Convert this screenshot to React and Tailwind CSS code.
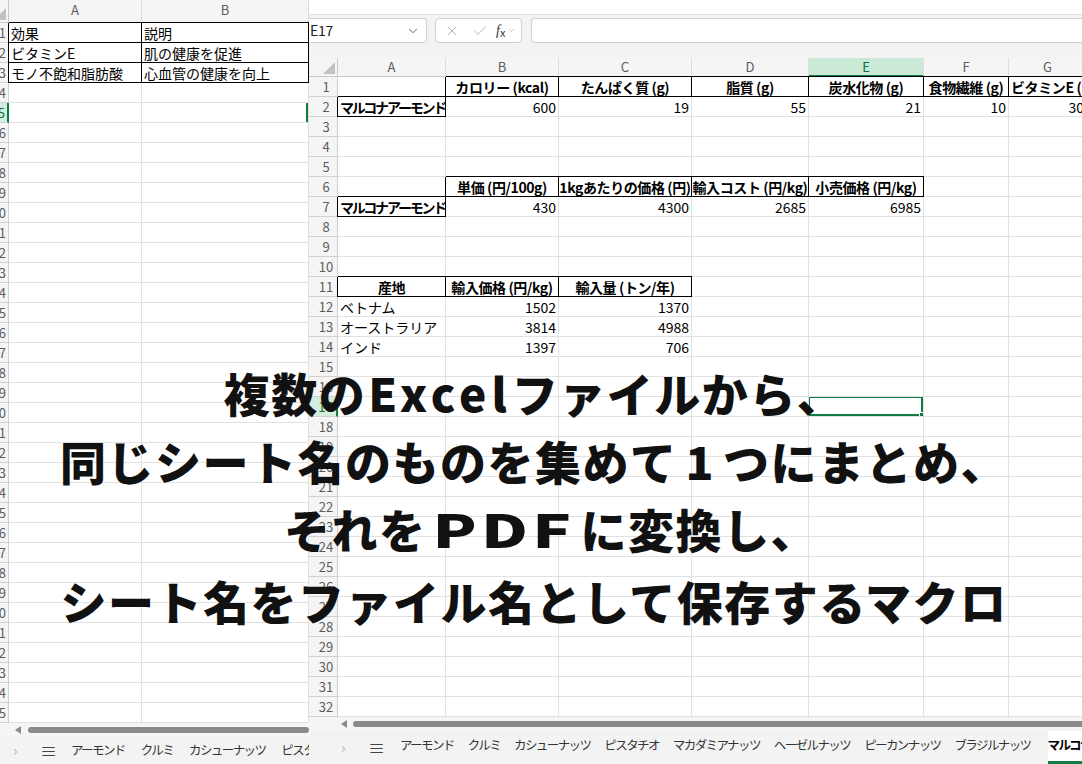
import React from 'react';
import { X, Check, ChevronDown } from 'lucide-react';

const FONT = "font-['Noto_Sans_CJK_JP','Noto_Sans',sans-serif]";

// 右側シートの列
const rCols = [
  { k: 'A', w: 'w-[108px]' },
  { k: 'B', w: 'w-[113px]' },
  { k: 'C', w: 'w-[133px]' },
  { k: 'D', w: 'w-[117px]' },
  { k: 'E', w: 'w-[115px]' },
  { k: 'F', w: 'w-[85px]' },
  { k: 'G', w: 'w-[78px]' },
];

// 左側シートの列
const lCols = [
  { k: 'A', w: 'w-[133px]' },
  { k: 'B', w: 'w-[167px]' },
];

const H = (t) => ({ t, b: true, c: 'center', box: true });
const N = (t) => ({ t, c: 'right' });
const L = (t) => ({ t, c: 'left' });
const NAME = { t: 'マルコナアーモンド', b: true, c: 'left', box: true, tight: true };

const rData = {
  1: {
    B: H('カロリー (kcal)'),
    C: H('たんぱく質 (g)'),
    D: H('脂質 (g)'),
    E: H('炭水化物 (g)'),
    F: H('食物繊維 (g)'),
    G: { t: 'ビタミンE (mg)', b: true, c: 'left', box: true },
  },
  2: { A: NAME, B: N('600'), C: N('19'), D: N('55'), E: N('21'), F: N('10'), G: N('30') },
  6: {
    B: H('単価 (円/100g)'),
    C: H('1kgあたりの価格 (円)'),
    D: H('輸入コスト (円/kg)'),
    E: H('小売価格 (円/kg)'),
  },
  7: { A: NAME, B: N('430'), C: N('4300'), D: N('2685'), E: N('6985') },
  11: { A: H('産地'), B: H('輸入価格 (円/kg)'), C: H('輸入量 (トン/年)') },
  12: { A: L('ベトナム'), B: N('1502'), C: N('1370') },
  13: { A: L('オーストラリア'), B: N('3814'), C: N('4988') },
  14: { A: L('インド'), B: N('1397'), C: N('706') },
};

const LB = (t) => ({ t, c: 'left', box: true });
const lData = {
  1: { A: LB('効果'), B: LB('説明') },
  2: { A: LB('ビタミンE'), B: LB('肌の健康を促進') },
  3: { A: LB('モノ不飽和脂肪酸'), B: LB('心血管の健康を向上') },
};

const Cell = ({ w, d, children }) => {
  const align =
    d?.c === 'right' ? 'justify-end pr-[2px]' : d?.c === 'center' ? 'justify-center' : 'justify-start pl-[2px]';
  const border = d?.box
    ? 'border-black shadow-[0_-1px_0_0_#000,-1px_0_0_0_#000]'
    : 'border-[#e1e1e1]';
  return (
    <div
      className={`${w} relative shrink-0 h-full flex items-center overflow-hidden whitespace-nowrap border-r border-b ${border} ${align}`}
    >
      {d && (
        <span
          className={`text-[14px] leading-none text-black ${d.b ? 'font-bold' : ''} ${d.tight ? 'tracking-[-2.2px]' : d.b ? 'tracking-[-0.4px]' : ''}`}
        >
          {d.t}
        </span>
      )}
      {children}
    </div>
  );
};

const Corner = ({ w }) => (
  <div className={`${w} shrink-0 h-full relative border-r border-b border-[#c8c8c8] overflow-hidden`}>
    <svg className="absolute right-[2px] bottom-[2px]" width="12" height="12" viewBox="0 0 12 12">
      <polygon points="12,0 12,12 0,12" fill="#c2c2c2" />
    </svg>
  </div>
);

const LeftWindow = () => {
  const rows = Array.from({ length: 35 }, (_, i) => i + 1);
  return (
    <div className={`w-[309px] shrink-0 h-full flex flex-col bg-white ${FONT}`}>
      {/* 列見出し */}
      <div className="h-[23px] flex bg-[#f5f5f5] shrink-0">
        <Corner w="w-[9px]" />
        {lCols.map((c) => (
          <div
            key={c.k}
            className={`${c.w} shrink-0 h-full flex items-end justify-center pb-[3px] border-r border-b border-r-[#dcdcdc] border-b-[#c8c8c8] text-[13px] text-[#5c5c5c]`}
          >
            {c.k}
          </div>
        ))}
      </div>
      <div className="flex flex-col">
        {rows.map((r) => (
          <div key={r} className="h-[20px] flex shrink-0">
            <div
              className={`w-[9px] shrink-0 h-full flex items-center justify-end overflow-hidden whitespace-nowrap pr-[2px] border-b text-[13px] ${
                r === 5
                  ? 'bg-[#d3eedd] text-[#0f6f3a] border-r-2 border-r-[#107c41] border-b-[#d0d0d0]'
                  : 'bg-[#f5f5f5] text-[#5c5c5c] border-r border-[#d0d0d0]'
              }`}
            >
              {r}
            </div>
            {lCols.map((c) => (
              <Cell key={c.k} w={c.w} d={lData[r]?.[c.k]}>
                {r === 5 && c.k === 'B' && <span className="absolute right-0 top-0 bottom-0 w-[2px] bg-[#107c41]" />}
              </Cell>
            ))}
          </div>
        ))}
      </div>
      {/* スクロールバー */}
      <div className="h-[14px] shrink-0 flex items-center bg-[#f5f5f5] pl-[15px]">
        <svg width="6" height="8" viewBox="0 0 6 8">
          <polygon points="6,0 6,8 0,4" fill="#8a8a8a" />
        </svg>
        <div className="ml-[7px] flex-1 h-[6px] rounded-full bg-[#8a8a8a]" />
      </div>
      {/* シートタブ */}
      <div className="flex-1 flex items-center bg-[#f3f3f3] text-[12.5px] tracking-[-1.6px] text-[#333] whitespace-nowrap overflow-hidden">
        <span className="ml-[13px] text-[#b5b5b5] text-[15px]">›</span>
        <span className="ml-[24px] text-[#444] text-[17px] tracking-normal">≡</span>
        <div className="ml-[14px] flex gap-[16px]">
          <span>アーモンド</span>
          <span>クルミ</span>
          <span>カシューナッツ</span>
          <span>ピスタチオ</span>
        </div>
      </div>
    </div>
  );
};

const RightWindow = () => {
  const rows = Array.from({ length: 32 }, (_, i) => i + 1);
  const tabs = ['アーモンド', 'クルミ', 'カシューナッツ', 'ピスタチオ', 'マカダミアナッツ', 'ヘーゼルナッツ', 'ピーカンナッツ', 'ブラジルナッツ'];
  return (
    <div className={`flex-1 h-full flex flex-col overflow-hidden bg-white ${FONT}`}>
      <div className="h-[15px] shrink-0 bg-white border-b border-[#e3e3e3]" />
      {/* 数式バー */}
      <div className="h-[43px] shrink-0 bg-[#f3f3f3] pt-[3px] flex items-start">
        <div className="w-[118px] h-[25px] bg-white border border-l-0 border-[#d0d0d0] rounded-r-[4px] flex items-center justify-between pl-[1px] pr-[6px]">
          <span className="text-[14px] text-[#222] tracking-[-0.3px]">E17</span>
          <ChevronDown size={14} strokeWidth={1.5} className="text-[#555]" />
        </div>
        <div className="ml-[8px] w-[87px] h-[25px] bg-white border border-[#d0d0d0] rounded-[4px] flex items-center pl-[8px] gap-[12px]">
          <X size={16} strokeWidth={1.2} className="text-[#a5a5a5]" />
          <Check size={16} strokeWidth={1.2} className="text-[#a5a5a5]" />
          <span className="flex items-center -ml-[4px]">
            <span className="font-['Liberation_Serif',serif] italic text-[14px] text-[#333]">f</span>
            <span className="text-[11px] text-[#333] mt-[3px]">x</span>
            <ChevronDown size={9} strokeWidth={1.5} className="text-[#999] ml-[2px]" />
          </span>
        </div>
        <div className="ml-[9px] flex-1 h-[25px] bg-white border border-r-0 border-[#d0d0d0] rounded-l-[4px]" />
      </div>
      {/* 列見出し */}
      <div className="h-[19px] flex bg-[#f5f5f5] shrink-0">
        <Corner w="w-[29px]" />
        {rCols.map((c) => (
          <div
            key={c.k}
            className={`${c.w} shrink-0 h-full flex items-center justify-center text-[13px] border-r border-r-[#dcdcdc] ${
              c.k === 'E'
                ? 'bg-[#caead7] text-[#0f6f3a] border-b-2 border-b-[#107c41]'
                : 'text-[#5c5c5c] border-b border-b-[#c8c8c8]'
            }`}
          >
            {c.k}
          </div>
        ))}
      </div>
      <div className="flex flex-col">
        {rows.map((r) => (
          <div key={r} className="h-[20px] flex shrink-0">
            <div
              className={`w-[29px] shrink-0 h-full flex items-center justify-center pl-[6px] border-b text-[13px] ${
                r === 17
                  ? 'bg-[#d3eedd] text-[#0f6f3a] border-r-2 border-r-[#107c41] border-b-[#d0d0d0]'
                  : 'bg-[#f5f5f5] text-[#5c5c5c] border-r border-[#d0d0d0]'
              }`}
            >
              {r}
            </div>
            {rCols.map((c) => (
              <Cell key={c.k} w={c.w} d={rData[r]?.[c.k]}>
                {r === 17 && c.k === 'E' && (
                  <>
                    <span className="absolute -left-[1px] -top-[1px] right-0 bottom-0 border-2 border-[#107c41]" />
                    <span className="absolute -right-[1px] -bottom-[1px] w-[5px] h-[5px] bg-[#107c41] border border-white" />
                  </>
                )}
              </Cell>
            ))}
          </div>
        ))}
      </div>
      {/* スクロールバー */}
      <div className="h-[14px] shrink-0 flex items-center bg-[#f5f5f5] pl-[32px]">
        <svg width="6" height="8" viewBox="0 0 6 8">
          <polygon points="6,0 6,8 0,4" fill="#8a8a8a" />
        </svg>
        <div className="ml-[6px] flex-1 h-[6px] rounded-l-full bg-[#8a8a8a]" />
      </div>
      {/* シートタブ */}
      <div className="flex-1 flex items-stretch bg-[#f3f3f3] text-[12.5px] tracking-[-1.6px] text-[#333] whitespace-nowrap overflow-hidden">
        <span className="ml-[32px] self-center text-[#b5b5b5] text-[15px]">›</span>
        <span className="ml-[24px] self-center text-[#444] text-[17px] tracking-normal">≡</span>
        <div className="ml-[15px] flex gap-[14px] items-stretch">
          {tabs.map((t) => (
            <span key={t} className="flex items-center pb-[4px]">
              {t}
            </span>
          ))}
          <span className="flex items-center pb-[1px] ml-[3px] font-bold text-black border-b-[3px] border-[#107c41] bg-white">
            マルコナアーモンド
          </span>
        </div>
      </div>
    </div>
  );
};

const Overlay = () => (
  <div className="absolute left-0 right-0 top-[358px] z-20 pr-[14px] flex flex-col items-center font-['Noto_Sans_CJK_JP',sans-serif] font-black text-[46px] leading-none text-[#111] tracking-[1.5px] whitespace-nowrap pointer-events-none">
    <div className="h-[68px] flex items-center">
      複数の<span className="tracking-[5px] ml-[2px]">Excel</span>ファイルから、
    </div>
    <div className="h-[68px] flex items-center">
      同じシート名のものを集めて<span className="mx-[8px]">1</span>つにまとめ、
    </div>
    <div className="h-[68px] flex items-center pl-[34px]">
      それを<span className="inline-block scale-x-[1.4] tracking-[3px] mx-[26px]">PDF</span>に変換し、
    </div>
    <div className="h-[76px] flex items-center">シート名をファイル名として保存するマクロ</div>
  </div>
);

const App = () => {
  return (
    <div className="relative w-[1082px] h-[764px] overflow-hidden bg-white flex">
      <LeftWindow />
      <RightWindow />
      <Overlay />
    </div>
  );
};

export default App;
